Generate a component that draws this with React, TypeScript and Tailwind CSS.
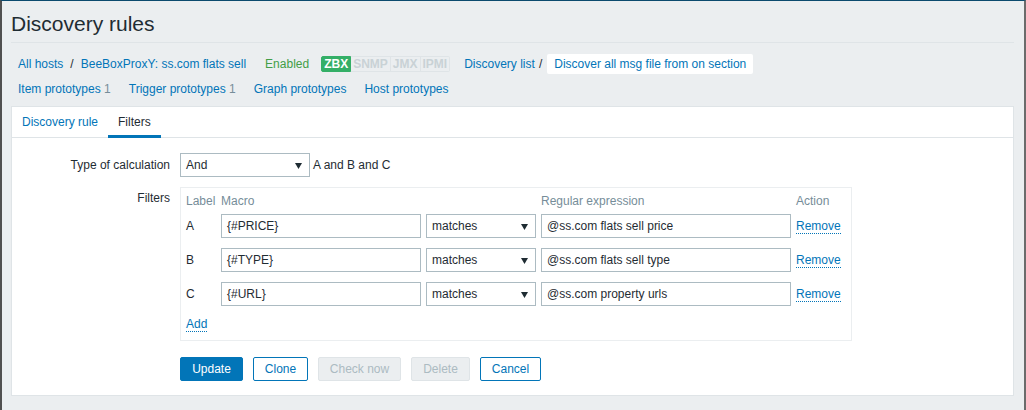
import React from "react";

const link = "text-[#0275b8]";

function Select({ value, width }: { value: string; width: string }) {
  return (
    <div
      className={`flex h-6 items-center justify-between border border-[#acbbc2] bg-white pl-[5px] pr-[7px] ${width}`}
    >
      <span>{value}</span>
      <svg width="7" height="6" viewBox="0 0 7 6" className="mt-px">
        <path d="M0 0h7L3.5 6z" fill="#1f2c33" />
      </svg>
    </div>
  );
}

function TextInput({ value }: { value: string }) {
  return (
    <div className="flex h-6 items-center border border-[#acbbc2] bg-white px-[5px]">{value}</div>
  );
}

const filters = [
  { label: "A", macro: "{#PRICE}", regex: "@ss.com flats sell price" },
  { label: "B", macro: "{#TYPE}", regex: "@ss.com flats sell type" },
  { label: "C", macro: "{#URL}", regex: "@ss.com property urls" },
];

const cols = "grid grid-cols-[30px_200px_110px_250px_auto] gap-x-[5px]";

export default function App() {
  return (
    <div className="relative h-[410px] w-[1026px] overflow-hidden border-t border-l-2 border-r-2 border-t-[#0b4a6e] border-l-[#505050] border-r-[#6b6b6b] bg-[#ebeef0] font-['Liberation_Sans',Arial,sans-serif] text-[12px] leading-[14px] text-[#1f2c33]">
      <div className="absolute left-[508px] top-[-1px] h-px w-[93px] bg-[#8ec3e6]" />
      <div className="pl-[9px] pr-[10px]">
        <div className="border-b border-[#dfe4e7] pb-[6px] pt-[11px]">
          <h1 className="text-[21px] leading-[24px]">Discovery rules</h1>
        </div>

        <div className="mt-[11px] flex h-5 items-center pl-[7px]">
          <a className={link}>All hosts</a>
          <span className="mx-[7px]">/</span>
          <a className={link}>BeeBoxProxY: ss.com flats sell</a>
          <span className="ml-[19px] text-[#429e47]">Enabled</span>
          <div className="ml-[12px] flex h-4 text-[12px] font-bold leading-[14px]">
            <span className="rounded-l-[2px] border border-[#34af67] bg-[#34af67] px-[2px] text-white">ZBX</span>
            <span className="border border-l-0 border-[#dfe4e7] px-[2px] text-[#c9d2d6]">SNMP</span>
            <span className="border border-l-0 border-[#dfe4e7] px-[2px] text-[#c9d2d6]">JMX</span>
            <span className="rounded-r-[2px] border border-l-0 border-[#dfe4e7] px-[2px] text-[#c9d2d6]">IPMI</span>
          </div>
          <a className={`ml-[14px] ${link}`}>Discovery list</a>
          <span className="ml-[4px] mr-[5px]">/</span>
          <span className="flex h-5 items-center rounded-[2px] bg-white px-[7px] text-[#0275b8]">
            Discover all msg file from on section
          </span>
        </div>

        <div className="mt-[5px] flex h-5 items-center gap-[18px] pl-[7px]">
          <span>
            <a className={link}>Item prototypes</a> <span className="text-[#768d99]">1</span>
          </span>
          <span>
            <a className={link}>Trigger prototypes</a> <span className="text-[#768d99]">1</span>
          </span>
          <a className={link}>Graph prototypes</a>
          <a className={link}>Host prototypes</a>
        </div>

        <div className="mt-[7px] border border-[#dfe4e7] bg-white pb-[14px]">
          <div className="flex h-[31px] border-b border-[#dfe4e7]">
            <a className={`px-[10px] pt-[8px] ${link}`}>Discovery rule</a>
            <span className="-mb-px border-b-[3px] border-[#0275b8] px-[10px] pt-[8px]">Filters</span>
          </div>

          <div className="grid grid-cols-[158px_auto] gap-x-[10px] gap-y-[10px] pt-[15px]">
            <div className="flex items-center justify-end">Type of calculation</div>
            <div className="flex items-center gap-[3px]">
              <Select value="And" width="w-[130px]" />
              <span>A and B and C</span>
            </div>

            <div className="pt-[4px] text-right">Filters</div>
            <div className="w-[672px] border border-[#ebeef0] pb-[9px] pl-[5px]">
              <div className={`${cols} pt-[5px] leading-4 text-[#768d99]`}>
                <span>Label</span>
                <span>Macro</span>
                <span />
                <span>Regular expression</span>
                <span>Action</span>
              </div>
              {filters.map((f) => (
                <div key={f.label} className={`${cols} items-center py-[5px]`}>
                  <span>{f.label}</span>
                  <TextInput value={f.macro} />
                  <Select value="matches" width="w-[110px]" />
                  <TextInput value={f.regex} />
                  <span>
                    <a className="border-b border-dotted border-[#0275b8] text-[#0275b8]">Remove</a>
                  </span>
                </div>
              ))}
              <div className="pt-[6px]">
                <a className="border-b border-dotted border-[#0275b8] text-[#0275b8]">Add</a>
              </div>
            </div>

            <div />
            <div className="mt-[6px] flex gap-[10px]">
              <button className="h-6 w-[63px] rounded-[2px] border border-[#0275b8] bg-[#0275b8] text-white">
                Update
              </button>
              <button className="h-6 w-[55px] rounded-[2px] border border-[#0275b8] bg-white text-[#0275b8]">
                Clone
              </button>
              <button className="h-6 w-[83px] rounded-[2px] border border-[#dfe4e7] bg-[#ebeef0] text-[#acbbc2]">
                Check now
              </button>
              <button className="h-6 w-[59px] rounded-[2px] border border-[#dfe4e7] bg-[#ebeef0] text-[#acbbc2]">
                Delete
              </button>
              <button className="h-6 w-[61px] rounded-[2px] border border-[#0275b8] bg-white text-[#0275b8]">
                Cancel
              </button>
            </div>
          </div>
        </div>
      </div>
    </div>
  );
}
